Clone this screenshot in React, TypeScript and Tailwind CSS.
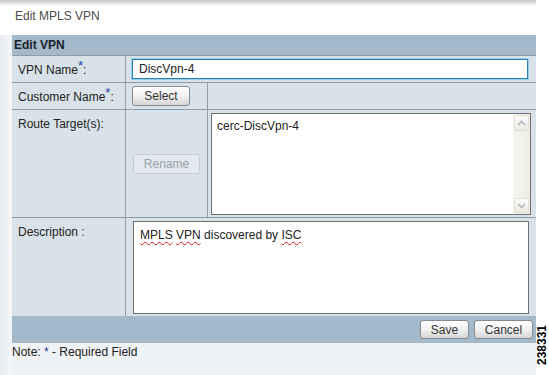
import React from 'react'

function Req() {
  return <span className="relative -top-[5px] text-[#1f3aa8] text-[13px] leading-none">*</span>
}

function Btn({ label, w, disabled }: { label: string; w: string; disabled?: boolean }) {
  return (
    <div
      className={`${w} flex items-center justify-center rounded-[3px] border text-[12px] leading-none ${
        disabled
          ? 'border-[#c3ccd3] bg-[#e3e9ee] text-[#98a3ab]'
          : 'border-[#858a8e] bg-gradient-to-b from-white via-[#f1f1f1] to-[#d6d6d6] text-[#333]'
      }`}
    >
      {label}
    </div>
  )
}

function Chevron({ up }: { up?: boolean }) {
  return (
    <svg width="9" height="6" viewBox="0 0 9 6">
      <path d={up ? 'M1 5 L4.5 1.5 L8 5' : 'M1 1 L4.5 4.5 L8 1'} fill="none" stroke="#aeb9c4" strokeWidth="1.6" />
    </svg>
  )
}

function Spell({ children }: { children: React.ReactNode }) {
  return <span className="underline decoration-wavy decoration-[#d42020] decoration-1 underline-offset-[2px]">{children}</span>
}

export default function App() {
  return (
    <div className="w-[549px] h-[375px] flex bg-white font-['Liberation_Sans',Arial,sans-serif] overflow-hidden">
      <div className="w-[536px] flex flex-col">
        <div className="h-[35px] bg-gradient-to-b from-[#c6c8ca] via-white via-[18%] to-white">
          <p className="pt-[9px] pl-[15px] text-[12px] leading-[14px] text-[#4d4d4d]">Edit MPLS VPN</p>
        </div>
        <div className="flex flex-1">
          <div className="w-[12px] bg-gradient-to-r from-[#e7ebef] to-[#f5f7f9]" />
          <div className="w-[524px] flex flex-col">
            <div className="flex flex-col text-[12px] text-[#222]">
              <div className="h-[21px] bg-[#a4b9c9] border-b border-[#8d9ca7] flex items-center pl-[2px] font-bold text-[#17222c]">
                Edit VPN
              </div>

              <div className="h-[27px] flex bg-[#d9e2e9] border-b border-[#8d9ca7]">
                <div className="w-[114px] border-r border-[#8d9ca7] flex items-center pl-[6px] pt-[2px]">
                  VPN Name<Req />:
                </div>
                <div className="flex-1 flex items-center pl-[6px]">
                  <div className="w-[396px] h-[20px] bg-white border border-[#2f7fab] shadow-[0_0_0_1px_#92cdea] flex items-center pl-[6px]">
                    DiscVpn-4
                  </div>
                </div>
              </div>

              <div className="h-[27px] flex bg-[#d9e2e9] border-b border-[#8d9ca7]">
                <div className="w-[114px] border-r border-[#8d9ca7] flex items-center pl-[6px] pt-[2px]">
                  Customer Name<Req />:
                </div>
                <div className="w-[82px] border-r border-[#8d9ca7] flex items-center pl-[6px]">
                  <Btn label="Select" w="w-[58px] h-[20px]" />
                </div>
                <div className="flex-1" />
              </div>

              <div className="h-[108px] flex bg-[#d9e2e9] border-b border-[#8d9ca7]">
                <div className="w-[114px] border-r border-[#8d9ca7] pl-[6px] pt-[5px]">Route Target(s):</div>
                <div className="w-[82px] border-r border-[#8d9ca7] flex items-center justify-center">
                  <Btn label="Rename" w="w-[67px] h-[20px]" disabled />
                </div>
                <div className="flex-1 pl-[3px] pt-[3px]">
                  <div className="w-[320px] h-[102px] bg-white border border-[#6a7276] flex">
                    <div className="flex-1 pl-[5px] pt-[3px]">cerc-DiscVpn-4</div>
                    <div className="w-[17px] flex flex-col justify-between bg-gradient-to-r from-[#f6f6f0] to-[#eeeee6] p-[1px]">
                      <div className="h-[16px] rounded-[2px] border border-[#e2e0d4] bg-gradient-to-b from-[#fbfbf8] to-[#ebebe3] flex items-center justify-center">
                        <Chevron up />
                      </div>
                      <div className="h-[15px] rounded-[2px] border border-[#e2e0d4] bg-gradient-to-b from-[#fbfbf8] to-[#ebebe3] flex items-center justify-center">
                        <Chevron />
                      </div>
                    </div>
                  </div>
                </div>
              </div>

              <div className="h-[98px] flex bg-[#d9e2e9]">
                <div className="w-[114px] border-r border-[#8d9ca7] pl-[6px] pt-[5px]">Description :</div>
                <div className="flex-1 pl-[7px] pt-[3px]">
                  <div className="w-[396px] h-[93px] bg-white border border-[#6a7276] pl-[6px] pt-[4px]">
                    <Spell>MPLS</Spell> <Spell>VPN</Spell> discovered by <Spell>ISC</Spell>
                  </div>
                </div>
              </div>

              <div className="h-[27px] bg-[#a4b9c9] flex items-center justify-end gap-[5px] pr-[3px]">
                <Btn label="Save" w="w-[49px] h-[19px]" />
                <Btn label="Cancel" w="w-[59px] h-[19px]" />
              </div>
            </div>

            <div className="flex-1 bg-[#eff2f5] pt-[2px] text-[12px] leading-[14px] text-[#222]">
              Note: <span className="text-[#1f3aa8]">*</span> - Required Field
            </div>
          </div>
        </div>
      </div>
      <div className="flex-1 flex flex-col justify-end items-center pb-[10px] pr-[1px]">
        <span className="[writing-mode:vertical-rl] rotate-180 text-[12px] font-bold leading-none text-black">238331</span>
      </div>
    </div>
  )
}
